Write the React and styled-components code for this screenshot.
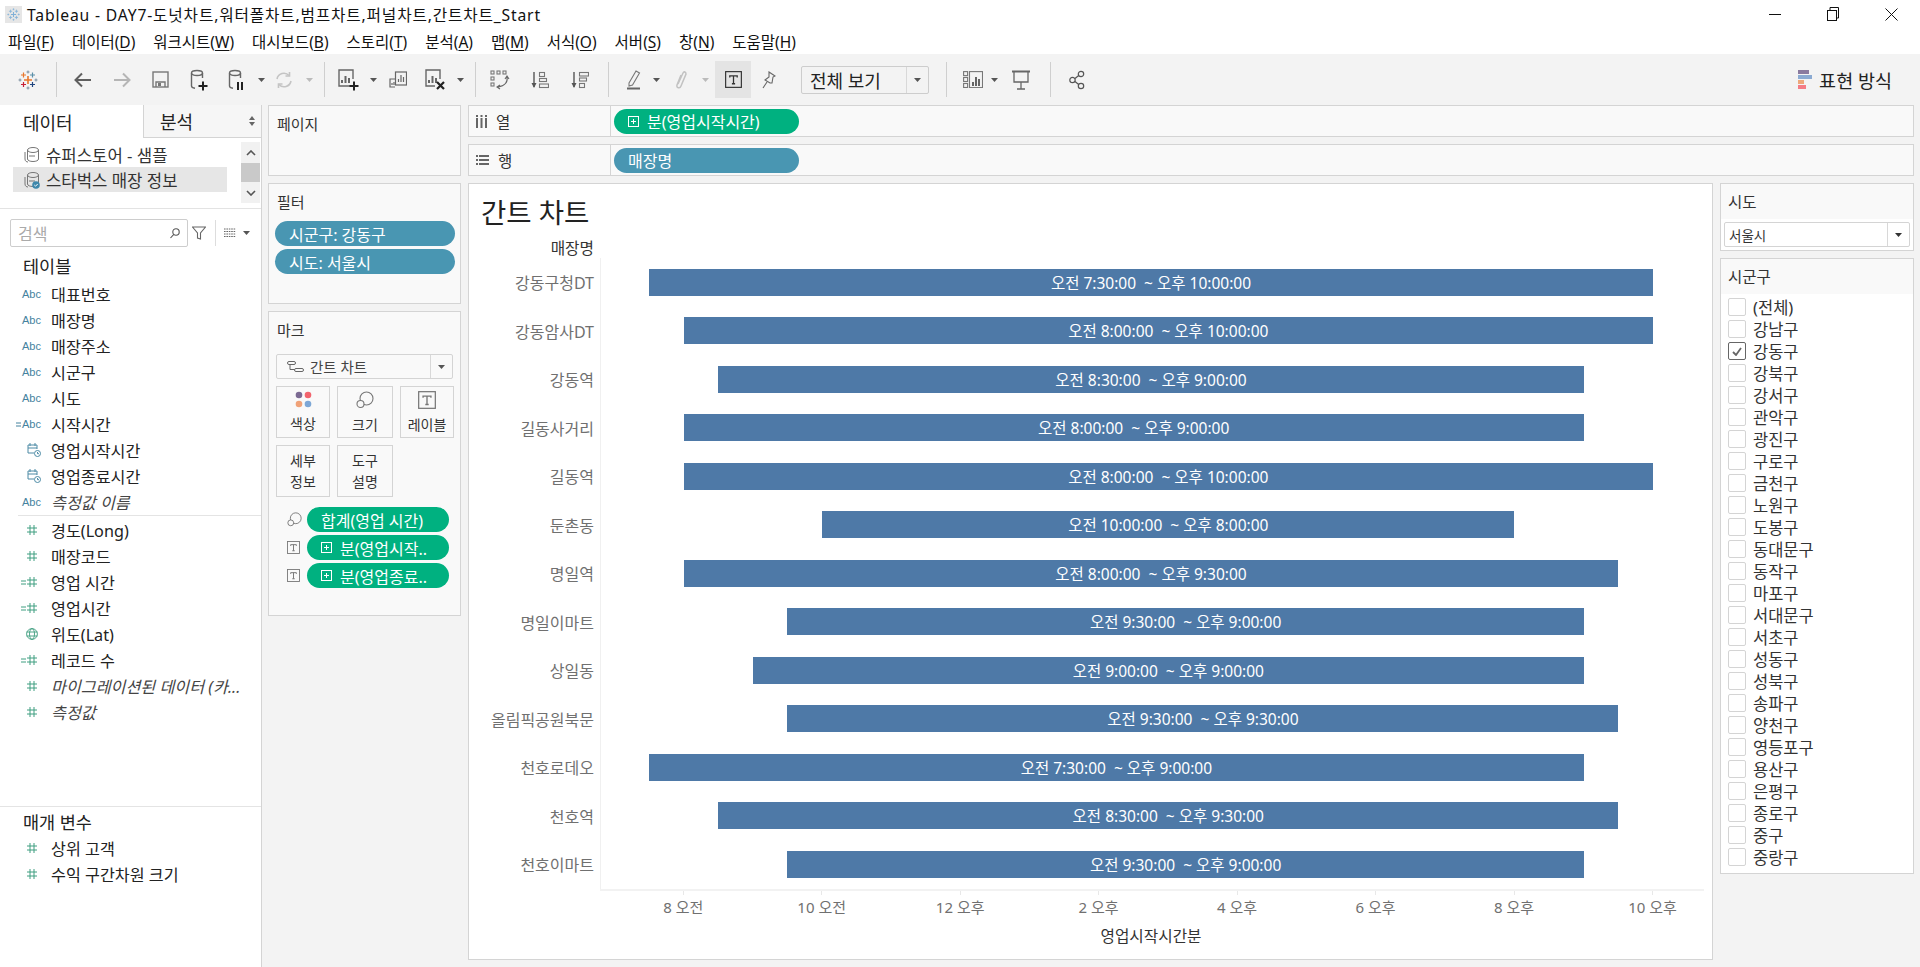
import React from 'react'
import styled, { createGlobalStyle } from 'styled-components'

const GlobalStyle = createGlobalStyle`
  * { box-sizing: border-box; }
  html, body { margin: 0; padding: 0; background: #fff; }
  body {
    font-family: "Noto Sans", "Noto Sans CJK KR", sans-serif;
    color: #222;
    overflow: hidden;
  }
`

const Page = styled.div`
  width: 1920px;
  height: 967px;
  display: flex;
  flex-direction: column;
  overflow: hidden;
`

// 타이틀 바
const TitleBar = styled.div`
  height: 28px;
  display: flex;
  align-items: center;
  padding-left: 5px;
  font-size: 15.7px;
  letter-spacing: 0.83px;
  color: #111;
`
const TitleText = styled.span`
  margin-left: 5px;
  white-space: nowrap;
`
const WindowButtons = styled.div`
  margin-left: auto;
  display: flex;
`
const WindowButton = styled.div`
  width: 58px;
  height: 28px;
  display: flex;
  align-items: center;
  justify-content: center;
`

const MenuBar = styled.div`
  height: 26px;
  display: flex;
  align-items: center;
  padding-left: 8px;
  gap: 18px;
  font-size: 15.5px;
  color: #111;
`
const MenuItem = styled.span`
  white-space: nowrap;
  u { text-underline-offset: 2px; }
`

// 툴바
const Toolbar = styled.div`
  height: 51px;
  display: flex;
  align-items: center;
  background: #f3f3f3;
`
const Tool = styled.div`
  width: ${p => p.$w || 36}px;
  height: 37px;
  margin-left: ${p => p.$ml || 0}px;
  flex: none;
  display: flex;
  align-items: center;
  justify-content: center;
  background: ${p => (p.$active ? '#e4e4e4' : 'transparent')};
`
const ToolSep = styled.div`
  width: 1px;
  height: 35px;
  flex: none;
  margin-left: ${p => p.$ml || 0}px;
  margin-right: ${p => p.$mr || 0}px;
  background: #cfcfcf;
`
const FitSelect = styled.div`
  width: 128px;
  height: 28px;
  margin-left: 14px;
  flex: none;
  display: flex;
  align-items: center;
  border: 1px solid #cdcdcd;
  border-radius: 2px;
  font-size: 18px;
  color: #222;
`
const SelectText = styled.span`
  flex: 1;
  display: flex;
  align-items: center;
  gap: 6px;
  padding-left: ${p => p.$pl || 8}px;
  white-space: nowrap;
`
const SelectCaret = styled.div`
  width: ${p => p.$w || 22}px;
  align-self: stretch;
  flex: none;
  display: flex;
  align-items: center;
  justify-content: center;
  border-left: 1px solid #d8d8d8;
`
const ShowMe = styled.div`
  margin-left: auto;
  margin-right: 28px;
  display: flex;
  align-items: center;
  gap: 7px;
  font-size: 18.5px;
  color: #222;
`

// 작업 영역
const Workspace = styled.div`
  flex: 1;
  min-height: 0;
  display: flex;
  background: #f3f3f3;
`

// 데이터 패널
const DataPane = styled.div`
  width: 262px;
  flex: none;
  display: flex;
  flex-direction: column;
  background: #fff;
  border-right: 1px solid #d4d4d4;
`
const Tabs = styled.div`
  height: 33px;
  flex: none;
  display: flex;
  font-size: 18px;
`
const DataTab = styled.div`
  width: 143px;
  padding-left: 23px;
  display: flex;
  align-items: center;
`
const AnalysisTab = styled.div`
  flex: 1;
  padding: 0 6px 0 16px;
  display: flex;
  align-items: center;
  justify-content: space-between;
  background: #f6f6f6;
  border-left: 1px solid #d4d4d4;
  border-bottom: 1px solid #d4d4d4;
`
const SourceArea = styled.div`
  height: 71px;
  flex: none;
  display: flex;
  padding: 4px 1px 0 13px;
  border-bottom: 1px solid #e3e3e3;
`
const SourceList = styled.div`
  width: 214px;
  display: flex;
  flex-direction: column;
`
const SourceRow = styled.div`
  height: 25px;
  display: flex;
  align-items: center;
  gap: 6px;
  padding-left: 11px;
  font-size: 16.7px;
  color: #333;
  background: ${p => (p.$selected ? '#e6e6e6' : 'transparent')};
`
const ScrollBar = styled.div`
  width: 19px;
  height: 61px;
  margin-left: auto;
  display: flex;
  flex-direction: column;
  background: #f1f1f1;
`
const ScrollButton = styled.div`
  height: 21px;
  display: flex;
  align-items: center;
  justify-content: center;
`
const ScrollThumb = styled.div`
  height: 19px;
  background: #c9c9c9;
`
const SearchRow = styled.div`
  height: 28px;
  margin-top: 10px;
  flex: none;
  display: flex;
  align-items: center;
  padding-left: 10px;
`
const SearchBox = styled.div`
  width: 178px;
  height: 28px;
  display: flex;
  align-items: center;
  justify-content: space-between;
  padding: 0 7px;
  border: 1px solid #cdcdcd;
  border-radius: 2px;
  font-size: 16px;
  color: #aaa;
`
const SearchSep = styled.div`
  width: 1px;
  height: 26px;
  margin: 0 8px 0 5px;
  background: #ddd;
`
const PaneHeading = styled.div`
  height: 28px;
  margin-top: ${p => p.$mt || 0}px;
  flex: none;
  display: flex;
  align-items: center;
  padding-left: 23px;
  font-size: 17.5px;
  color: #222;
`
const FieldList = styled.div`
  flex: none;
  margin-top: ${p => p.$mt || 0}px;
  display: flex;
  flex-direction: column;
`
const FieldRow = styled.div`
  height: 26px;
  display: flex;
  align-items: center;
  gap: 10px;
  font-size: 16.2px;
  color: #222;
  white-space: nowrap;
`
const FieldIconBox = styled.div`
  width: 41px;
  flex: none;
  display: flex;
  align-items: center;
  justify-content: flex-end;
  padding-right: ${p => p.$pr || 0}px;
  font-family: "Liberation Sans", sans-serif;
  font-size: 11px;
  color: #45829e;
`
const FieldName = styled.span`
  font-style: ${p => (p.$italic ? 'italic' : 'normal')};
  color: ${p => (p.$italic ? '#444' : '#222')};
`
const FieldDivider = styled.div`
  height: 1px;
  flex: none;
  margin-left: ${p => p.$ml || 0}px;
  margin-top: ${p => p.$mt || 0}px;
  background: #e4e4e4;
`

// 카드 열
const CardColumn = styled.div`
  width: 193px;
  margin: 0 7px 0 6px;
  flex: none;
  display: flex;
  flex-direction: column;
  gap: 7px;
`
const Card = styled.div`
  height: ${p => p.$h}px;
  flex: none;
  padding: 0 5px;
  background: #f9f9f9;
  border: 1px solid #d4d4d4;
`
const CardTitle = styled.div`
  height: 37px;
  padding: 0 0 3px 3px;
  display: flex;
  align-items: center;
  font-size: 15px;
  color: #333;
`
const Pill = styled.div`
  height: 25px;
  flex: none;
  width: ${p => (p.$w ? `${p.$w}px` : 'auto')};
  display: flex;
  align-items: center;
  gap: 5px;
  padding-left: 14px;
  border-radius: 13px;
  background: ${p => (p.$green ? '#00b180' : '#4996b2')};
  color: #fff;
  font-size: 16px;
  white-space: nowrap;
`
const PillStack = styled.div`
  margin-left: 1px;
  display: flex;
  flex-direction: column;
  gap: 3px;
`
const MarkSelect = styled.div`
  height: 25px;
  margin: 5px 2px 0;
  display: flex;
  align-items: center;
  background: #f9f9f9;
  border: 1px solid #d4d4d4;
  border-radius: 2px;
  font-size: 14.5px;
  color: #444;
`
const MarkGrid = styled.div`
  margin: 7px 2px 0;
  display: grid;
  grid-template-columns: 54px 56px 54px;
  grid-auto-rows: 52px;
  gap: 7px 7px;
`
const MarkButton = styled.div`
  display: flex;
  flex-direction: column;
  align-items: center;
  justify-content: center;
  gap: 6px;
  border: 1px solid #d4d4d4;
  font-size: 14px;
  line-height: 19px;
  color: #333;
  text-align: center;
`
const MarkLines = styled.span`
  line-height: 21px;
`
const MarkShelf = styled.div`
  margin-top: 10px;
  display: flex;
  flex-direction: column;
  gap: 3px;
`
const MarkShelfRow = styled.div`
  display: flex;
  align-items: center;
`
const MarkShelfIcon = styled.div`
  width: 33px;
  padding-left: 13px;
  flex: none;
  display: flex;
  align-items: center;
`

// 메인 영역
const Main = styled.div`
  flex: 1;
  min-width: 0;
  margin-right: 6px;
  display: flex;
  flex-direction: column;
  gap: 7px;
`
const Shelf = styled.div`
  height: 32px;
  flex: none;
  display: flex;
  align-items: center;
  background: #f9f9f9;
  border: 1px solid #d4d4d4;
`
const ShelfLabel = styled.div`
  width: 142px;
  align-self: stretch;
  flex: none;
  display: flex;
  align-items: center;
  gap: 9px;
  padding-left: 7px;
  margin-right: 3px;
  border-right: 1px solid #d4d4d4;
  font-size: 15.5px;
  color: #333;
`
const ContentRow = styled.div`
  flex: 1;
  min-height: 0;
  display: flex;
  gap: 7px;
  padding-bottom: 7px;
`

// 뷰
const View = styled.div`
  width: 1245px;
  flex: none;
  background: #fff;
  border: 1px solid #d4d4d4;
  display: flex;
  flex-direction: column;
`
const ViewTitle = styled.div`
  height: 54px;
  flex: none;
  padding: 0 0 1px 12px;
  display: flex;
  align-items: center;
  font-size: 27.5px;
  color: #222;
`
const RowHeader = styled.div`
  height: 20px;
  flex: none;
  width: 125px;
  text-align: right;
  font-size: 15.7px;
  line-height: 20px;
  color: #333;
`
const ChartRows = styled.div`
  display: grid;
  grid-auto-rows: 48.5px;
  flex: none;
`
const ChartRow = styled.div`
  display: flex;
  align-items: center;
`
const RowLabel = styled.div`
  width: 125px;
  margin-right: 6px;
  flex: none;
  text-align: right;
  font-size: 16px;
  color: #707070;
  white-space: nowrap;
`
const Plot = styled.div`
  width: 1104px;
  align-self: stretch;
  flex: none;
  display: flex;
  align-items: center;
  border-left: 1px solid #f0f0f0;
`
const Bar = styled.div`
  height: 27px;
  flex: none;
  display: flex;
  align-items: center;
  justify-content: center;
  background: #4e79a7;
  color: #fff;
  font-size: 15.5px;
  white-space: pre;
`
const Axis = styled.div`
  width: 1104px;
  margin-left: 131px;
  flex: none;
  padding-left: 14px;
  display: grid;
  grid-template-columns: repeat(8, 138.48px);
  border-top: 2px solid #f2f2f2;
`
const AxisTick = styled.div`
  height: 30px;
  padding-top: 6px;
  text-align: center;
  font-size: 15px;
  line-height: 20px;
  color: #707070;
  white-space: nowrap;
  background: linear-gradient(#e8e8e8, #e8e8e8) center top / 1px 4px no-repeat;
`
const AxisTitle = styled.div`
  width: 1104px;
  margin: 5px 0 0 130px;
  flex: none;
  text-align: center;
  font-size: 15.7px;
  line-height: 20px;
  color: #333;
`

// 오른쪽 필터
const FilterColumn = styled.div`
  width: 194px;
  flex: none;
  display: flex;
  flex-direction: column;
  gap: 7px;
`
const QuickCard = styled.div`
  height: ${p => p.$h}px;
  flex: none;
  background: #fff;
  border: 1px solid #d4d4d4;
`
const QuickTitle = styled.div`
  height: ${p => p.$h}px;
  padding-left: 7px;
  display: flex;
  align-items: center;
  background: #f9f9f9;
  font-size: 15.5px;
  color: #333;
`
const QuickSelect = styled.div`
  height: 25px;
  margin: 3px 3px 0;
  display: flex;
  align-items: center;
  border: 1px solid #d4d4d4;
  border-radius: 2px;
  font-size: 13.5px;
  color: #333;
`
const CheckList = styled.div`
  padding: 2px 0 0 7px;
  display: flex;
  flex-direction: column;
`
const CheckRow = styled.div`
  height: 22px;
  display: flex;
  align-items: center;
  gap: 7px;
  font-size: 16.5px;
  color: #333;
`
const CheckBox = styled.div`
  width: 18px;
  height: 18px;
  flex: none;
  display: flex;
  align-items: center;
  justify-content: center;
  border: 1px solid ${p => (p.$checked ? '#666' : '#d4d4d4')};
  border-radius: 2px;
`

// 아이콘
const Caret = ({ color = '#555' }) => (
  <svg width="7" height="4" viewBox="0 0 7 4" style={{ flex: 'none' }}><path d="M0 0h7L3.5 4z" fill={color} /></svg>
)

const Ico = ({ w = 24, h = 24, children, fill = 'none', stroke = '#666', sw = 1.4 }) => (
  <svg width={w} height={h} viewBox={`0 0 ${w} ${h}`} fill={fill} stroke={stroke} strokeWidth={sw}>{children}</svg>
)

const TableauLogo = ({ size = 20, mono }) => {
  const c = mono ? ['#7fb0d8', '#7fb0d8', '#7fb0d8', '#7fb0d8', '#7fb0d8'] : ['#e8762b', '#5a8fa8', '#c72037', '#1f447e', '#7b8fa0']
  const cross = (x, y, r, color, sw) => (
    <path d={`M${x - r} ${y}h${r * 2}M${x} ${y - r}v${r * 2}`} stroke={color} strokeWidth={sw} />
  )
  return (
    <svg width={size} height={size} viewBox="0 0 20 20" fill="none">
      {cross(10, 10, 4, c[0], 1.6)}
      {cross(5.5, 5, 2.5, c[0], 1.2)}
      {cross(14.5, 5, 2.5, c[1], 1.2)}
      {cross(5.5, 14.5, 2.5, c[2], 1.2)}
      {cross(14.5, 14.5, 2.5, c[3], 1.2)}
      {cross(10, 2, 1.5, c[4], 1)}
      {cross(10, 18, 1.5, c[4], 1)}
      {cross(2, 10, 1.5, c[4], 1)}
      {cross(18, 10, 1.5, c[4], 1)}
    </svg>
  )
}

const Cyl = () => (
  <>
    <ellipse cx="9" cy="5" rx="5.5" ry="2.5" />
    <path d="M3.5 5v13c0 1.2 1.5 2 3.5 2.3M14.5 5v5" />
  </>
)

const BackIcon = ({ color = '#5f5f5f' }) => (
  <Ico w={18} h={16} stroke={color} sw={2}><path d="M17 8H2M8 1.5L1.5 8 8 14.5" /></Ico>
)
const ForwardIcon = ({ color = '#b5b5b5' }) => (
  <Ico w={18} h={16} stroke={color} sw={2}><path d="M1 8h15M10 1.5L16.5 8 10 14.5" /></Ico>
)
const SaveIcon = () => (
  <Ico w={17} h={17} stroke="#777"><rect x="1" y="1" width="15" height="15" /><path d="M4 16v-5h9v5" /><rect x="6" y="12" width="3" height="3" fill="#777" stroke="none" /></Ico>
)
const PlusMark = ({ x, y }) => <path d={`M${x - 4.5} ${y}h9M${x} ${y - 4.5}v9`} stroke="#222" strokeWidth="2" />
const DsNewIcon = () => <Ico w={22} h={24}><Cyl /><PlusMark x={15} y={18} /></Ico>
const DsPauseIcon = () => (
  <Ico w={20} h={24}><Cyl /><path d="M12 14v8M16 14v8" stroke="#222" strokeWidth="2" /></Ico>
)
const RefreshIcon = () => (
  <Ico w={18} h={18} stroke="#c4c4c4" sw={1.6}><path d="M2 8a7 7 0 0 1 12-3.5M16 10a7 7 0 0 1-12 3.5" /><path d="M14.5 1v4h-4M3.5 17v-4h4" /></Ico>
)
const ChartBars = ({ x = 4, y = 14, c = '#666' }) => (
  <path d={`M${x} ${y}v-3M${x + 3.5} ${y}v-7M${x + 7} ${y}v-5`} stroke={c} strokeWidth="2" />
)
const NewSheetIcon = () => (
  <Ico w={22} h={22}><path d="M15 17H1V1h14v9" /><ChartBars /><PlusMark x={16} y={17} /></Ico>
)
const DupSheetIcon = () => (
  <Ico w={18} h={18} stroke="#666" sw={1.2}><path d="M6 16H1V8h5" /><rect x="6.5" y="1" width="11" height="13" fill="#f3f3f3" /><path d="M9.5 11V8M12 11V4M14.5 11V6" /><path d="M3 14v-2M5 14v-3" /></Ico>
)
const ClearSheetIcon = () => (
  <Ico w={22} h={22}><path d="M15 10V1H1v16h9" /><ChartBars /><path d="M12 13l7 7M19 13l-7 7" stroke="#222" strokeWidth="2.2" /></Ico>
)
const SwapIcon = () => (
  <Ico w={20} h={20} stroke="#777" sw={1.1}>
    <rect x="1" y="1" width="3" height="3" /><rect x="7" y="1" width="3" height="3" /><rect x="13" y="1" width="3" height="3" />
    <rect x="1" y="7" width="3" height="3" /><rect x="1" y="13" width="3" height="3" />
    <path d="M17 7c1 5-2 9-9 10M15 9l2-3 2 3M10 15l-3 2 3 2" stroke="#666" />
  </Ico>
)
const SortAscIcon = () => (
  <Ico w={18} h={18} stroke="#777" sw={1.1}>
    <path d="M3 1v15" stroke="#555" strokeWidth="1.4" /><path d="M.5 12h5L3 17z" fill="#555" stroke="none" />
    <rect x="8.5" y="1.5" width="5" height="4" /><rect x="8.5" y="7.5" width="7" height="3" /><rect x="8.5" y="13" width="9" height="3.5" />
  </Ico>
)
const SortDescIcon = () => (
  <Ico w={18} h={18} stroke="#777" sw={1.1}>
    <path d="M3 1v15" stroke="#555" strokeWidth="1.4" /><path d="M.5 12h5L3 17z" fill="#555" stroke="none" />
    <rect x="8.5" y="1.5" width="9" height="3.5" /><rect x="8.5" y="7" width="7" height="3" /><rect x="8.5" y="12.5" width="5" height="4" />
  </Ico>
)
const PenIcon = () => (
  <Ico w={14} h={20} stroke="#777" sw={1.1}><path d="M2 13L9 1l3.5 2-7 12-3.5 1z" /><rect x="0" y="17.5" width="13" height="2" fill="#666" stroke="none" /></Ico>
)
const ClipIcon = () => (
  <Ico w={12} h={20} stroke="#c2c2c2" sw={1.5}><path d="M3 14l5-11c1-2 3-1 3 1L6 16c-1 3-5 2-4-1l4-10" /></Ico>
)
const TextBoxIcon = ({ w = 16, c = '#333' }) => (
  <svg width={w} height={w} viewBox="0 0 16 16" fill="none" stroke={c} strokeWidth="1.1">
    <rect x=".6" y=".6" width="14.8" height="14.8" />
    <path d="M4.5 6V4.5h7V6M8 4.5v7.5M6.5 12h3" strokeWidth="1.2" />
  </svg>
)
const PinIcon = () => (
  <Ico w={14} h={18} stroke="#666" sw={1.1}><path d="M7 1l6 4-2 1-1 6-2 0-5-3 4-3zM5 11l-4 6" /></Ico>
)
const FitChartIcon = () => (
  <Ico w={20} h={17} stroke="#777" sw={1.1}>
    <rect x=".6" y=".6" width="4" height="4" /><rect x=".6" y="6.5" width="4" height="4" /><rect x=".6" y="12.5" width="4" height="4" />
    <rect x="6.5" y=".6" width="13" height="16" /><path d="M10 15v-4M13 15V6M16 15v-7" stroke="#555" strokeWidth="1.8" />
  </Ico>
)
const PresentIcon = () => (
  <Ico w={18} h={20} stroke="#666" sw={1.3}><path d="M0 1.5h18" strokeWidth="2" /><path d="M2 2v10h14V2M9 12v7M5 19h8" /></Ico>
)
const ShareIcon = () => (
  <Ico w={16} h={20} stroke="#555" sw={1.2}><circle cx="3.5" cy="10" r="2.7" /><circle cx="12" cy="4" r="2.7" /><circle cx="12" cy="16" r="2.7" /><path d="M6 8.5l3.7-3M6 11.5l3.7 3" /></Ico>
)
const ShowMeIcon = () => (
  <svg width="14" height="19" viewBox="0 0 14 19">
    <rect width="11" height="4" fill="#8a7a9f" /><rect y="5" width="14" height="4" fill="#8baad2" />
    <rect y="10" width="6" height="4" fill="#eea77a" /><rect y="15" width="8" height="4" fill="#f47c85" />
  </svg>
)
const DbIcon = ({ badge }) => (
  <svg width="16" height="18" viewBox="0 0 16 18" fill="none" stroke="#777" strokeWidth="1" style={{ flex: 'none' }}>
    <ellipse cx="9" cy="4" rx="5.5" ry="2.5" />
    <path d="M3.5 4v9c0 1.5 2.5 2.5 5.5 2.5s5.5-1 5.5-2.5V4M1 6v7c0 2 1.5 3 3 3" />
    <path d="M5 10l6 0" />
    {badge && <circle cx="12" cy="14" r="3.8" fill="#3e87ab" stroke="none" />}
    {badge && <path d="M10.3 14l1.2 1.2 2.2-2.2" stroke="#fff" />}
  </svg>
)
const FilterIcon = () => (
  <Ico w={14} h={14} stroke="#666" sw={1.1}><path d="M.5 1h13L8.5 7v6l-3-1V7z" /></Ico>
)
const GridListIcon = () => (
  <svg width="12" height="10" viewBox="0 0 12 10" fill="none" stroke="#666" strokeDasharray="1.6 .8"><path d="M0 1h12M0 3.5h12M0 6h12M0 8.5h12" /></svg>
)
const MagIcon = () => (
  <Ico w={10} h={11} stroke="#555" sw={1.1}><circle cx="6" cy="4" r="3.2" /><path d="M3.8 6.3L.5 10" /></Ico>
)
const NumMark = ({ c = '#3f9e80' }) => (
  <svg width="10" height="10" viewBox="0 0 10 10" stroke={c} strokeWidth="1" fill="none"><path d="M3 0v10M7 0v10M0 3h10M0 7h10" /></svg>
)
const CalcMark = ({ c }) => (
  <svg width="5" height="5" viewBox="0 0 5 5" stroke={c} strokeWidth="1" style={{ marginRight: 1 }}><path d="M0 1h5M0 4h5" /></svg>
)
const DateIcon = () => (
  <svg width="14" height="14" viewBox="0 0 14 14" fill="none" stroke="#4c8aa5" strokeWidth="1">
    <path d="M7 10H1V2h9v4M1 5h9M3 0v3M8 0v3" />
    <circle cx="10.5" cy="10.5" r="3" fill="#fff" />
    <path d="M10.5 9v1.7h1.5" />
  </svg>
)
const GlobeIcon = () => (
  <svg width="12" height="12" viewBox="0 0 12 12" fill="none" stroke="#3f9e80" strokeWidth=".9">
    <circle cx="6" cy="6" r="5.4" /><ellipse cx="6" cy="6" rx="2.5" ry="5.4" /><path d="M.6 4h10.8M.6 8h10.8" />
  </svg>
)
const PlusBox = () => (
  <svg width="11" height="11" viewBox="0 0 11 11" fill="none" stroke="#fff" strokeWidth="1" style={{ flex: 'none', marginRight: 3 }}><rect x=".5" y=".5" width="10" height="10" /><path d="M3 5.5h5M5.5 3v5" /></svg>
)
const SizeIcon = ({ s = 18 }) => (
  <svg width={s} height={s} viewBox="0 0 18 18" fill="none" stroke="#777" strokeWidth="1.1">
    <circle cx="10.5" cy="7.5" r="6.5" fill="none" /><circle cx="4.5" cy="13" r="3.5" fill="#f9f9f9" />
  </svg>
)
const ColorIcon = () => (
  <svg width="17" height="17" viewBox="0 0 17 17">
    <circle cx="4" cy="4" r="3.3" fill="#7b6a92" /><circle cx="13" cy="4" r="3.3" fill="#f2646d" />
    <circle cx="4" cy="13" r="3.3" fill="#f0a278" /><circle cx="13" cy="13" r="3.3" fill="#7da7d6" />
  </svg>
)
const GanttIcon = () => (
  <svg width="17" height="12" viewBox="0 0 17 12" fill="none" stroke="#666" style={{ flex: 'none' }}><rect x=".5" y=".5" width="8" height="3" rx="1.5" /><rect x="7.5" y="7.5" width="9" height="3" rx="1.5" /><path d="M3 4v4.5h4.5" /></svg>
)
const ColumnsIcon = () => (
  <svg width="11" height="13" viewBox="0 0 11 13" fill="#666"><rect y="3" width="2" height="10" /><rect x="4.5" y="3" width="2" height="10" /><rect x="9" y="3" width="2" height="10" /><rect y="0" width="2" height="2" /><rect x="4.5" y="0" width="2" height="2" /><rect x="9" y="0" width="2" height="2" /></svg>
)
const RowsIcon = () => (
  <svg width="13" height="10" viewBox="0 0 13 10" fill="#666"><rect y="0" width="2" height="2" /><rect y="4" width="2" height="2" /><rect y="8" width="2" height="2" /><rect x="3" y="0" width="10" height="2" /><rect x="3" y="4" width="10" height="2" /><rect x="3" y="8" width="10" height="2" /></svg>
)
const Chevron = ({ up }) => (
  <svg width="10" height="6" viewBox="0 0 10 6" fill="none" stroke="#555" strokeWidth="1.6"><path d={up ? 'M1 5l4-4 4 4' : 'M1 1l4 4 4-4'} /></svg>
)
const SortArrows = () => (
  <svg width="6" height="10" viewBox="0 0 6 10" fill="#666"><path d="M3 0l3 4H0zM3 10l3-4H0z" /></svg>
)
const AppIcon = () => (
  <svg width="17" height="17" viewBox="0 0 17 17" fill="none" style={{ flex: 'none' }}>
    <rect width="17" height="17" fill="#e6e6e6" />
    <g transform="translate(2 2) scale(.65)"><TableauLogo mono size={20} /></g>
  </svg>
)

const menus = [
  ['파일', 'F'], ['데이터', 'D'], ['워크시트', 'W'], ['대시보드', 'B'], ['스토리', 'T'], ['분석', 'A'],
  ['맵', 'M'], ['서식', 'O'], ['서버', 'S'], ['창', 'N'], ['도움말', 'H'],
]

const tableFields = [
  ['abc', '대표번호'], ['abc', '매장명'], ['abc', '매장주소'], ['abc', '시군구'], ['abc', '시도'],
  ['calcAbc', '시작시간'], ['date', '영업시작시간'], ['date', '영업종료시간'], ['abc', '측정값 이름', true],
]
const measureFields = [
  ['num', '경도(Long)'], ['num', '매장코드'], ['calcNum', '영업 시간'], ['calcNum', '영업시간'],
  ['geo', '위도(Lat)'], ['calcNum', '레코드 수'], ['num', '마이그레이션된 데이터 (카...', true], ['num', '측정값', true],
]

const stores = [
  ['강동구청DT', 7.5, 22], ['강동암사DT', 8, 22], ['강동역', 8.5, 21], ['길동사거리', 8, 21], ['길동역', 8, 22],
  ['둔촌동', 10, 20], ['명일역', 8, 21.5], ['명일이마트', 9.5, 21], ['상일동', 9, 21], ['올림픽공원북문', 9.5, 21.5],
  ['천호로데오', 7.5, 21], ['천호역', 8.5, 21.5], ['천호이마트', 9.5, 21],
]

const ticks = ['8 오전', '10 오전', '12 오후', '2 오후', '4 오후', '6 오후', '8 오후', '10 오후']

const districts = [
  '(전체)', '강남구', '강동구', '강북구', '강서구', '관악구', '광진구', '구로구', '금천구', '노원구', '도봉구', '동대문구',
  '동작구', '마포구', '서대문구', '서초구', '성동구', '성북구', '송파구', '양천구', '영등포구', '용산구', '은평구', '종로구', '중구', '중랑구',
]

const PX_PER_HOUR = 69.24

function timeLabel(h) {
  const hour = Math.floor(h)
  const min = h % 1 ? '30' : '00'
  return `${hour < 12 ? '오전' : '오후'} ${hour > 12 ? hour - 12 : hour}:${min}:00`
}

function FieldIcon({ kind }) {
  if (kind === 'abc') return <FieldIconBox>Abc</FieldIconBox>
  if (kind === 'calcAbc') return <FieldIconBox><CalcMark c="#45829e" />Abc</FieldIconBox>
  if (kind === 'date') return <FieldIconBox><DateIcon /></FieldIconBox>
  if (kind === 'geo') return <FieldIconBox $pr={3}><GlobeIcon /></FieldIconBox>
  if (kind === 'calcNum') return <FieldIconBox $pr={4}><CalcMark c="#3f9e80" /><NumMark /></FieldIconBox>
  return <FieldIconBox $pr={4}><NumMark /></FieldIconBox>
}

function Field({ kind, name, italic }) {
  return (
    <FieldRow>
      <FieldIcon kind={kind} />
      <FieldName $italic={italic}>{name}</FieldName>
    </FieldRow>
  )
}

export default function App() {
  return (
    <Page>
      <GlobalStyle />
      <TitleBar>
        <AppIcon />
        <TitleText>Tableau - DAY7-도넛차트,워터폴차트,범프차트,퍼널차트,간트차트_Start</TitleText>
        <WindowButtons>
          <WindowButton>
            <svg width="12" height="1"><path d="M0 .5h12" stroke="#111" /></svg>
          </WindowButton>
          <WindowButton>
            <svg width="12" height="14" fill="none" stroke="#111"><rect x=".5" y="3.5" width="9" height="10" /><path d="M3 3V.5h8.5V11H10" /></svg>
          </WindowButton>
          <WindowButton>
            <svg width="13" height="13" stroke="#111"><path d="M.5.5l12 12M12.5.5l-12 12" /></svg>
          </WindowButton>
        </WindowButtons>
      </TitleBar>

      <MenuBar>
        {menus.map(([name, key]) => (
          <MenuItem key={key}>{name}(<u>{key}</u>)</MenuItem>
        ))}
      </MenuBar>

      <Toolbar>
        <Tool $w={56}><TableauLogo /></Tool>
        <ToolSep $mr={7} />
        <Tool $w={38}><BackIcon /></Tool>
        <Tool $w={40}><ForwardIcon /></Tool>
        <Tool $w={36}><SaveIcon /></Tool>
        <Tool $w={42}><DsNewIcon /></Tool>
        <Tool $w={32}><DsPauseIcon /></Tool>
        <Tool $w={18}><Caret /></Tool>
        <Tool $w={28}><RefreshIcon /></Tool>
        <Tool $w={22}><Caret color="#bbb" /></Tool>
        <ToolSep $ml={4} $mr={6} />
        <Tool $w={36}><NewSheetIcon /></Tool>
        <Tool $w={12}><Caret /></Tool>
        <Tool $w={38}><DupSheetIcon /></Tool>
        <Tool $w={38}><ClearSheetIcon /></Tool>
        <Tool $w={10}><Caret /></Tool>
        <ToolSep $ml={10} $mr={6} />
        <Tool $w={36}><SwapIcon /></Tool>
        <Tool $w={44}><SortAscIcon /></Tool>
        <Tool $w={36}><SortDescIcon /></Tool>
        <ToolSep $ml={10} $mr={7} />
        <Tool $w={36}><PenIcon /></Tool>
        <Tool $w={8}><Caret /></Tool>
        <Tool $w={42}><ClipIcon /></Tool>
        <Tool $w={6}><Caret color="#bbb" /></Tool>
        <Tool $w={36} $ml={7} $active><TextBoxIcon w={17} /></Tool>
        <Tool $w={36}><PinIcon /></Tool>
        <FitSelect>
          <SelectText>전체 보기</SelectText>
          <SelectCaret><Caret /></SelectCaret>
        </FitSelect>
        <ToolSep $ml={17} $mr={10} />
        <Tool $w={32}><FitChartIcon /></Tool>
        <Tool $w={10}><Caret /></Tool>
        <Tool $w={44}><PresentIcon /></Tool>
        <ToolSep $ml={7} $mr={12} />
        <Tool $w={28}><ShareIcon /></Tool>
        <ShowMe><ShowMeIcon />표현 방식</ShowMe>
      </Toolbar>

      <Workspace>
        <DataPane>
          <Tabs>
            <DataTab>데이터</DataTab>
            <AnalysisTab>분석<SortArrows /></AnalysisTab>
          </Tabs>
          <SourceArea>
            <SourceList>
              <SourceRow><DbIcon />슈퍼스토어 - 샘플</SourceRow>
              <SourceRow $selected><DbIcon badge />스타벅스 매장 정보</SourceRow>
            </SourceList>
            <ScrollBar>
              <ScrollButton><Chevron up /></ScrollButton>
              <ScrollThumb />
              <ScrollButton><Chevron /></ScrollButton>
            </ScrollBar>
          </SourceArea>
          <SearchRow>
            <SearchBox>검색<MagIcon /></SearchBox>
            <Tool $w={22}><FilterIcon /></Tool>
            <SearchSep />
            <GridListIcon />
            <Tool $w={20}><Caret /></Tool>
          </SearchRow>
          <PaneHeading $mt={4}>테이블</PaneHeading>
          <FieldList $mt={2}>
            {tableFields.map(([kind, name, italic]) => <Field key={name} kind={kind} name={name} italic={italic} />)}
          </FieldList>
          <FieldDivider $ml={18} />
          <FieldList $mt={1}>
            {measureFields.map(([kind, name, italic]) => <Field key={name} kind={kind} name={name} italic={italic} />)}
          </FieldList>
          <FieldDivider $mt={81} />
          <PaneHeading>매개 변수</PaneHeading>
          <FieldList>
            <Field kind="num" name="상위 고객" />
            <Field kind="num" name="수익 구간차원 크기" />
          </FieldList>
        </DataPane>

        <CardColumn>
          <Card $h={71}><CardTitle>페이지</CardTitle></Card>
          <Card $h={121}>
            <CardTitle>필터</CardTitle>
            <PillStack>
              <Pill>시군구: 강동구</Pill>
              <Pill>시도: 서울시</Pill>
            </PillStack>
          </Card>
          <Card $h={305}>
            <CardTitle>마크</CardTitle>
            <MarkSelect>
              <SelectText $pl={10}><GanttIcon />간트 차트</SelectText>
              <SelectCaret><Caret /></SelectCaret>
            </MarkSelect>
            <MarkGrid>
              <MarkButton><ColorIcon />색상</MarkButton>
              <MarkButton><SizeIcon />크기</MarkButton>
              <MarkButton><TextBoxIcon w={18} c="#777" />레이블</MarkButton>
              <MarkButton><MarkLines>세부<br />정보</MarkLines></MarkButton>
              <MarkButton><MarkLines>도구<br />설명</MarkLines></MarkButton>
            </MarkGrid>
            <MarkShelf>
              <MarkShelfRow>
                <MarkShelfIcon><SizeIcon s={15} /></MarkShelfIcon>
                <Pill $green $w={142}>합계(영업 시간)</Pill>
              </MarkShelfRow>
              <MarkShelfRow>
                <MarkShelfIcon><TextBoxIcon w={13} c="#777" /></MarkShelfIcon>
                <Pill $green $w={142}><PlusBox />분(영업시작..</Pill>
              </MarkShelfRow>
              <MarkShelfRow>
                <MarkShelfIcon><TextBoxIcon w={13} c="#777" /></MarkShelfIcon>
                <Pill $green $w={142}><PlusBox />분(영업종료..</Pill>
              </MarkShelfRow>
            </MarkShelf>
          </Card>
        </CardColumn>

        <Main>
          <Shelf>
            <ShelfLabel><ColumnsIcon />열</ShelfLabel>
            <Pill $green $w={185}><PlusBox />분(영업시작시간)</Pill>
          </Shelf>
          <Shelf>
            <ShelfLabel><RowsIcon />행</ShelfLabel>
            <Pill $w={185}>매장명</Pill>
          </Shelf>
          <ContentRow>
            <View>
              <ViewTitle>간트 차트</ViewTitle>
              <RowHeader>매장명</RowHeader>
              <ChartRows>
                {stores.map(([name, start, end]) => (
                  <ChartRow key={name}>
                    <RowLabel>{name}</RowLabel>
                    <Plot>
                      <Bar style={{ marginLeft: 48 + (start - 7.5) * PX_PER_HOUR, width: (end - start) * PX_PER_HOUR }}>
                        {`${timeLabel(start)}  ~ ${timeLabel(end)}`}
                      </Bar>
                    </Plot>
                  </ChartRow>
                ))}
              </ChartRows>
              <Axis>
                {ticks.map(t => <AxisTick key={t}>{t}</AxisTick>)}
              </Axis>
              <AxisTitle>영업시작시간분</AxisTitle>
            </View>
            <FilterColumn>
              <QuickCard $h={68}>
                <QuickTitle $h={35}>시도</QuickTitle>
                <QuickSelect>
                  <SelectText $pl={4}>서울시</SelectText>
                  <SelectCaret $w={22}><Caret color="#333" /></SelectCaret>
                </QuickSelect>
              </QuickCard>
              <QuickCard $h={616}>
                <QuickTitle $h={35}>시군구</QuickTitle>
                <CheckList>
                  {districts.map(d => (
                    <CheckRow key={d}>
                      <CheckBox $checked={d === '강동구'}>
                        {d === '강동구' && (
                          <svg width="10" height="9" fill="none" stroke="#666" strokeWidth="1.8"><path d="M1 5l3 3 5-7" /></svg>
                        )}
                      </CheckBox>
                      {d}
                    </CheckRow>
                  ))}
                </CheckList>
              </QuickCard>
            </FilterColumn>
          </ContentRow>
        </Main>
      </Workspace>
    </Page>
  )
}
